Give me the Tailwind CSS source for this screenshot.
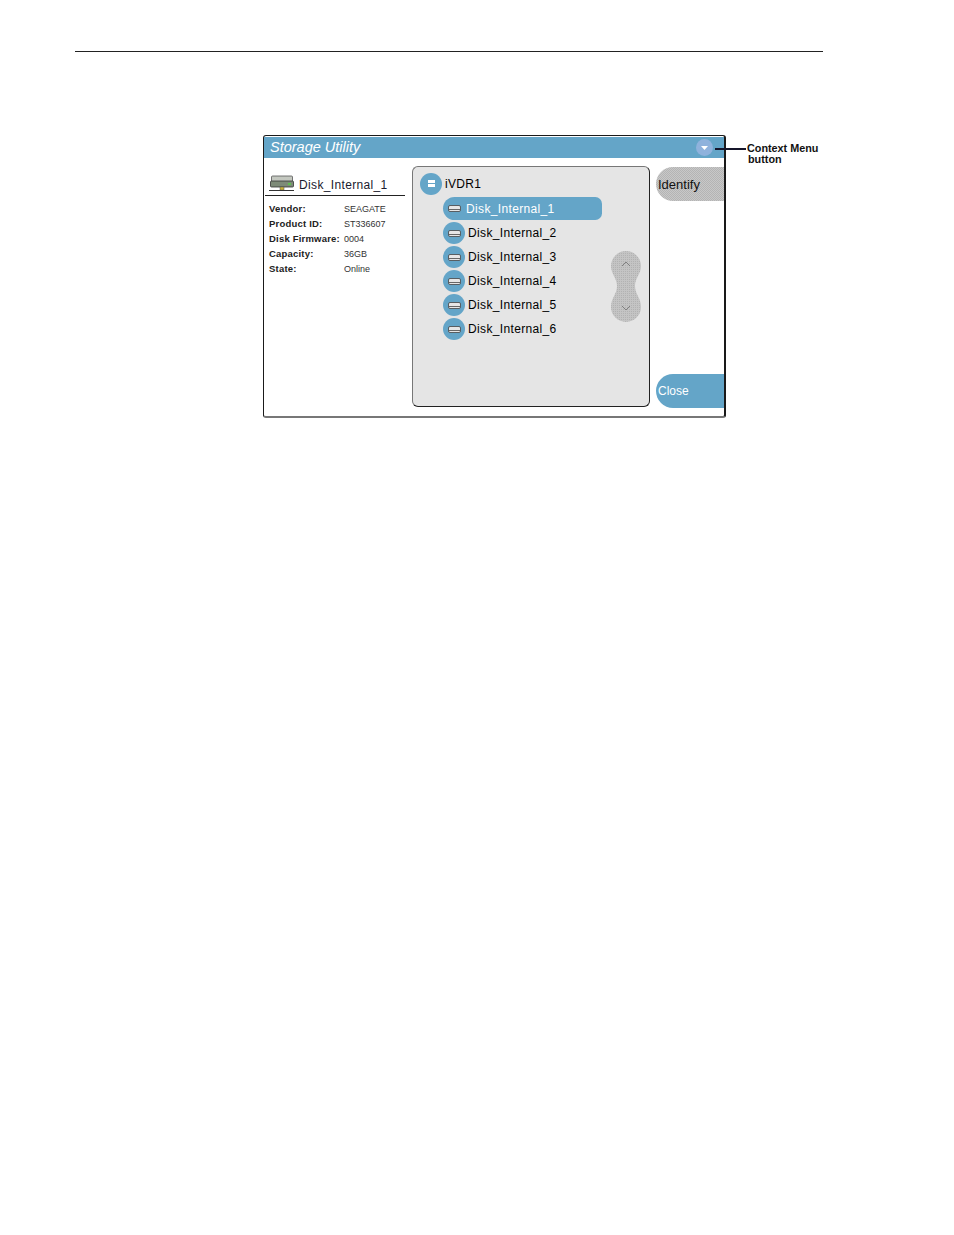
<!DOCTYPE html>
<html lang="en">

<head>
  <meta charset="UTF-8">
  <title>Storage Utility</title>
  <script src="https://cdn.jsdelivr.net/npm/@tailwindcss/browser@4"></script>
</head>

<body class="bg-white text-black font-['Liberation_Sans',Arial,sans-serif] antialiased">
  <div class="relative w-[954px] h-[1235px] overflow-hidden">
    <div class="ml-[75px] mt-[51px] w-[748px] h-px bg-[#222]"></div>

    <!-- window -->
    <div class="relative ml-[263px] mt-[83px] w-[463px] h-[283px] pt-px border-2 border-l-[1.5px] border-t-[1.5px] border-[#1a1a1a] border-b-[#777] rounded-[3px] flex flex-col">
      <div class="h-[21px] bg-[#64a5c8] flex items-center justify-between pl-[6px] pr-[11px] shrink-0">
        <span class="italic text-white text-[14.500px] leading-none">Storage Utility</span>
        <span class="w-[17px] h-[17px] rounded-full bg-[#8fb2dc] flex items-center justify-center">
          <svg width="7" height="4" viewBox="0 0 7 4"><path d="M0 0h7L3.500 4z" fill="#fff"/></svg>
        </span>
      </div>

      <div class="flex flex-1 min-h-0">
        <!-- details column -->
        <div class="w-[148px] shrink-0 pl-[1px] pt-[15px]">
          <div class="w-[140px] h-[23px] border-b border-[#222] flex items-center gap-[5px] pl-[4px] pt-[2px]">
            <svg class="-mt-[3px]" width="25" height="18" viewBox="0 0 25 18">
              <rect x="2.500" y="1" width="21" height="6" rx="1" fill="#c4c8c0" stroke="#555" stroke-width=".8"/>
              <rect x="1.500" y="6" width="23" height="6" rx="1" fill="#7d8a78" stroke="#333" stroke-width=".8"/>
              <rect x="19" y="8" width="3" height="2" fill="#5fc04e"/>
              <rect x="11" y="12" width="4" height="3" fill="#c9b23a" stroke="#555" stroke-width=".5"/>
              <path d="M0 15.500h25" stroke="#333" stroke-width="1"/>
            </svg>
            <span class="text-[12px] leading-none tracking-[.35px] text-[#1a1a2e]">Disk_Internal_1</span>
          </div>
          <dl class="pl-[4px] pt-[5px] grid grid-cols-[75px_1fr] auto-rows-[15px] items-center text-[9.500px] leading-none tracking-[.2px]">
            <dt class="font-bold text-[#222]">Vendor:</dt><dd class="pt-px text-[#333] text-[9px] tracking-normal">SEAGATE</dd>
            <dt class="font-bold text-[#222]">Product ID:</dt><dd class="pt-px text-[#333] text-[9px] tracking-normal">ST336607</dd>
            <dt class="font-bold text-[#222] whitespace-nowrap">Disk Firmware:</dt><dd class="pt-px text-[#333] text-[9px] tracking-normal">0004</dd>
            <dt class="font-bold text-[#222]">Capacity:</dt><dd class="pt-px text-[#333] text-[9px] tracking-normal">36GB</dd>
            <dt class="font-bold text-[#222]">State:</dt><dd class="pt-px text-[#333] text-[9px] tracking-normal">Online</dd>
          </dl>
        </div>

        <!-- tree panel -->
        <div class="relative w-[238px] h-[241px] mt-[8px] shrink-0 bg-[#e5e5e5] border border-[#222] border-t-[#777] border-l-[#777] rounded-[6px] pl-[7px] pt-[5px]">
          <div class="flex items-center gap-[3px] h-[23px]">
            <span class="w-[22px] h-[22px] rounded-full bg-[#64a5c8] flex items-center justify-center">
              <span class="w-[7px] h-[7px] bg-white flex flex-col justify-center"><span class="h-px bg-[#64a5c8]"></span></span>
            </span>
            <span class="text-[12px] leading-none tracking-[.3px]">iVDR1</span>
          </div>
          <div class="ml-[23px] mt-[2px] flex flex-col">
            <div class="flex items-center w-[159px] h-[23px] mb-[1px] rounded-l-[12px] rounded-r-[7px] bg-[#64a5c8]">
              <span class="w-[23px] h-[23px] flex items-center justify-center"><svg width="13" height="7" viewBox="0 0 13 7"><rect x=".5" y=".5" width="12" height="6" rx="1.500" fill="#e6e6e6" stroke="#444" stroke-width=".8"/><path d="M1 4.500h11" stroke="#666"/></svg></span>
              <span class="text-white text-[12px] leading-none tracking-[.35px]">Disk_Internal_1</span>
            </div>
            <div class="flex items-center h-[24px] gap-[3px]">
              <span class="w-[22px] h-[22px] rounded-full bg-[#64a5c8] flex items-center justify-center"><svg width="13" height="7" viewBox="0 0 13 7"><rect x=".5" y=".5" width="12" height="6" rx="1.500" fill="#e6e6e6" stroke="#444" stroke-width=".8"/><path d="M1 4.500h11" stroke="#666"/></svg></span>
              <span class="text-[12px] leading-none tracking-[.35px]">Disk_Internal_2</span>
            </div>
            <div class="flex items-center h-[24px] gap-[3px]">
              <span class="w-[22px] h-[22px] rounded-full bg-[#64a5c8] flex items-center justify-center"><svg width="13" height="7" viewBox="0 0 13 7"><rect x=".5" y=".5" width="12" height="6" rx="1.500" fill="#e6e6e6" stroke="#444" stroke-width=".8"/><path d="M1 4.500h11" stroke="#666"/></svg></span>
              <span class="text-[12px] leading-none tracking-[.35px]">Disk_Internal_3</span>
            </div>
            <div class="flex items-center h-[24px] gap-[3px]">
              <span class="w-[22px] h-[22px] rounded-full bg-[#64a5c8] flex items-center justify-center"><svg width="13" height="7" viewBox="0 0 13 7"><rect x=".5" y=".5" width="12" height="6" rx="1.500" fill="#e6e6e6" stroke="#444" stroke-width=".8"/><path d="M1 4.500h11" stroke="#666"/></svg></span>
              <span class="text-[12px] leading-none tracking-[.35px]">Disk_Internal_4</span>
            </div>
            <div class="flex items-center h-[24px] gap-[3px]">
              <span class="w-[22px] h-[22px] rounded-full bg-[#64a5c8] flex items-center justify-center"><svg width="13" height="7" viewBox="0 0 13 7"><rect x=".5" y=".5" width="12" height="6" rx="1.500" fill="#e6e6e6" stroke="#444" stroke-width=".8"/><path d="M1 4.500h11" stroke="#666"/></svg></span>
              <span class="text-[12px] leading-none tracking-[.35px]">Disk_Internal_5</span>
            </div>
            <div class="flex items-center h-[24px] gap-[3px]">
              <span class="w-[22px] h-[22px] rounded-full bg-[#64a5c8] flex items-center justify-center"><svg width="13" height="7" viewBox="0 0 13 7"><rect x=".5" y=".5" width="12" height="6" rx="1.500" fill="#e6e6e6" stroke="#444" stroke-width=".8"/><path d="M1 4.500h11" stroke="#666"/></svg></span>
              <span class="text-[12px] leading-none tracking-[.35px]">Disk_Internal_6</span>
            </div>
          </div>

          <!-- scroll control -->
          <svg class="absolute left-[198px] top-[84px]" width="30" height="71" viewBox="0 0 30 71">
            <defs>
              <pattern id="dots" width="2" height="2" patternUnits="userSpaceOnUse">
                <rect width="2" height="2" fill="#c4c4c4"/>
                <rect width="1" height="1" fill="#b2b2b2"/>
              </pattern>
            </defs>
            <path d="M15 0a15 15 0 0 1 15 15c0 8-6 12-6 20s6 12 6 21a15 15 0 0 1-30 0c0-9 6-13 6-21S0 23 0 15A15 15 0 0 1 15 0z" fill="url(#dots)"/>
            <path d="M11 15l4-4 4 4M11 55l4 4 4-4" fill="none" stroke="#808080" stroke-width="1"/>
          </svg>
        </div>

        <!-- side buttons -->
        <div class="flex-1 flex flex-col justify-between pl-[6px] pt-[9px] pb-[8px]">
          <div class="h-[34px] bg-[repeating-conic-gradient(#b4b4b4_0_25%,#c8c8c8_0_50%)] bg-[length:2px_2px] rounded-l-full flex items-center pl-[2px] text-[13px] leading-none text-[#111]">Identify</div>
          <div class="h-[34px] bg-[#64a5c8] rounded-l-full flex items-center pl-[2px] text-[12px] leading-none text-white">Close</div>
        </div>
      </div>

      <!-- callout -->
      <div class="absolute left-[451px] top-[12px] w-[31px] h-[2px] bg-[#15152a]"></div>
      <div class="absolute left-[483px] top-[7px] w-[80px] text-[10.800px] leading-[10.500px] font-bold text-[#111]">Context Menu<br><span class="pl-[1px]">button</span></div>
    </div>
  </div>
</body>

</html>
